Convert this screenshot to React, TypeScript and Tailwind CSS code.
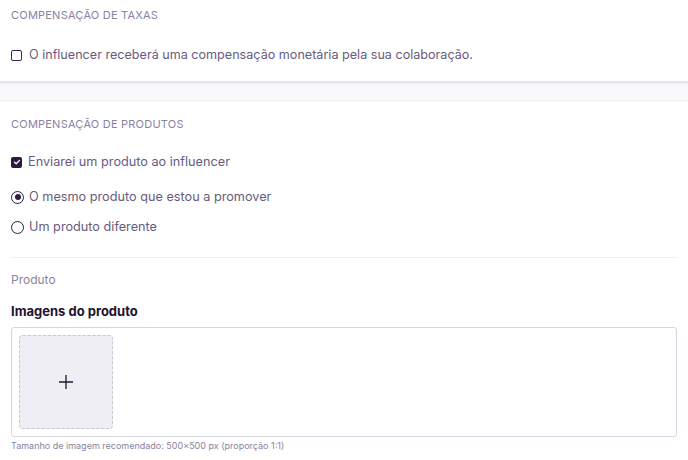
import React from "react";

export default function App() {
  const font = { fontFamily: "Inter, 'Noto Sans', sans-serif" };
  return (
    <div style={font} className="w-[688px] h-[460px] overflow-hidden bg-[#f9f9fb]">
      <div className="bg-white h-[82px] px-[11px] pt-[8px] shadow-[0_1px_2px_rgba(0,0,0,0.10)] border-b border-[#e6e6ea]">
        <div className="text-[11px] leading-[14px] tracking-[0.02em] text-[#8a82a0]">COMPENSAÇÃO DE TAXAS</div>
        <label className="mt-[24px] flex items-center gap-[7px] text-[12.6px] leading-[18px] text-[#675b7d]">
          <span className="w-[11px] h-[11px] rounded-[2px] border-[1.5px] border-[#3a2450] bg-white"></span>
          O influencer receberá uma compensação monetária pela sua colaboração.
        </label>
      </div>
      <div className="h-[18px]"></div>
      <div className="bg-white border-t border-[#eeeef2] h-[400px] px-[11px] pt-[16px]">
        <div className="text-[11px] leading-[14px] tracking-[0.02em] text-[#8a82a0]">COMPENSAÇÃO DE PRODUTOS</div>
        <label className="mt-[22px] flex items-center gap-[6px] text-[12.7px] leading-[18px] text-[#675b7d]">
          <span className="w-[11px] h-[11px] rounded-[2px] bg-[#2e1a40] flex items-center justify-center">
            <svg width="8" height="8" viewBox="0 0 8 8" fill="none">
              <path d="M1.5 4.2 L3.2 5.8 L6.5 2.4" stroke="white" strokeWidth="1.3" strokeLinecap="round" strokeLinejoin="round" />
            </svg>
          </span>
          Enviarei um produto ao influencer
        </label>
        <label className="mt-[17px] flex items-center gap-[5px] text-[12.7px] leading-[18px] text-[#675b7d]">
          <span className="w-[13px] h-[13px] rounded-full border-[1.5px] border-[#2e1a40] flex items-center justify-center">
            <span className="w-[6px] h-[6px] rounded-full bg-[#2e1a40]"></span>
          </span>
          O mesmo produto que estou a promover
        </label>
        <label className="mt-[12px] flex items-center gap-[5px] text-[12.7px] leading-[18px] text-[#675b7d]">
          <span className="w-[13px] h-[13px] rounded-full border-[1.5px] border-[#2e1a40]"></span>
          Um produto diferente
        </label>
        <div className="mt-[21px] w-[666px] border-t border-[#efeff3]"></div>
        <div className="mt-[15px] text-[12px] leading-[14px] text-[#8a82a0]">Produto</div>
        <div className="mt-[16px] text-[13px] leading-[16px] font-bold text-[#24132f]">Imagens do produto</div>
        <div className="mt-[8px] w-[666px] h-[110px] rounded-[3px] border border-[#d6d4e0] p-[7px]">
          <div className="w-[94px] h-[94px] rounded-[4px] border border-dashed border-[#c9c6d4] bg-[#efeef4] flex items-center justify-center">
            <svg width="16" height="16" viewBox="0 0 16 16">
              <path d="M8 1 V15 M1 8 H15" stroke="#24132f" strokeWidth="1.3" />
            </svg>
          </div>
        </div>
        <div className="mt-[3px] text-[9px] leading-[12px] text-[#8a82a0]">Tamanho de imagem recomendado: 500×500 px (proporção 1:1)</div>
      </div>
    </div>
  );
}
